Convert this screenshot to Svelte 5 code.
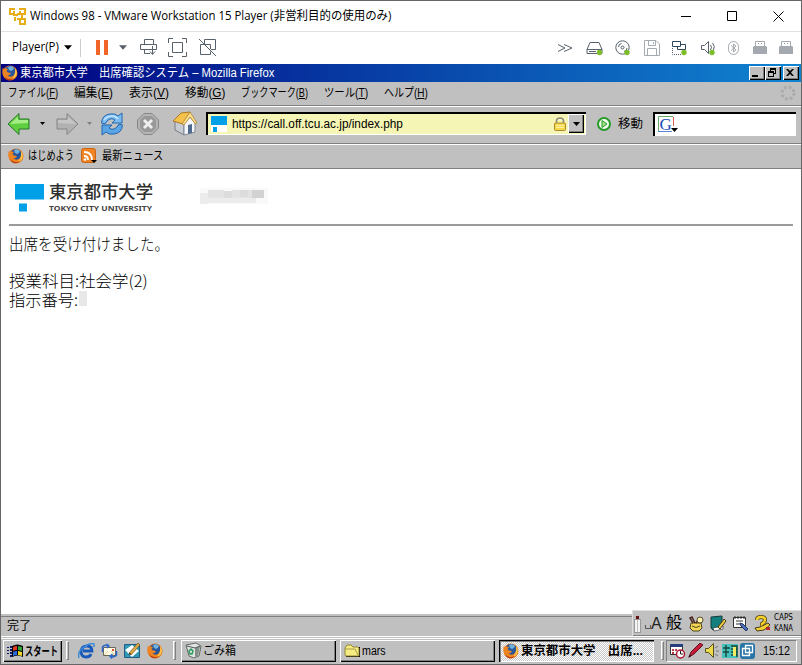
<script>
  const menus = [
    { text: 'ファイル(', key: 'F', width: 50 },
    { text: '編集(', key: 'E', width: 39 },
    { text: '表示(', key: 'V', width: 40 },
    { text: '移動(', key: 'G', width: 40 },
    { text: 'ブックマーク(', key: 'B', width: 67 },
    { text: 'ツール(', key: 'T', width: 44 },
    { text: 'ヘルプ(', key: 'H', width: 44 }
  ];

  // squeeze the label into the width of the old UI font
  function fit(node, width) {
    const inner = node.firstElementChild;
    inner.style.transform = `scaleX(${width / inner.offsetWidth})`;
  }
</script>

{#snippet label(text, width, key = '')}
  <span class="label" style:width="{width}px" use:fit={width}><span class="inner">{text}{#if key}<u>{key}</u>){/if}</span></span>
{/snippet}

{#snippet caret(kind)}
  <svg class="caret {kind}" width="9" height="5" viewBox="0 0 9 5"><path d="M0 0h9L4.500 5z" /></svg>
{/snippet}

{#snippet firefox()}
  <svg class="fox" width="16" height="16" viewBox="0 0 16 16">
    <circle cx="8" cy="8" r="7.500" fill="#e0701a" />
    <circle cx="8" cy="6.500" r="5.500" fill="#28569c" />
    <path d="M6 2q4-2 6 1-1 3-3 3L7 5z" fill="#6fb2dc" />
    <path d="M1 2q0 2 1 2 2-1 4 0L4.500 6 6 7.500l3 .5q-1 3-4 2 3 3 6 1t2-7q4 5 0 9-5 4-10 0Q-1 9 1 2z" fill="#ee8420" />
    <path d="M13 3q3 4 1 8-2 3-5 3 5-3 4-11z" fill="#fbc64a" />
    <path d="M2 11q4 5 10 2-4 4-8 1z" fill="#b83a16" />
  </svg>
{/snippet}

{#snippet usb()}
  <svg width="14" height="16" viewBox="0 0 14 16">
    <path d="M2.500 7V1.500h9V7" fill="#fff" stroke="#a3a9ae" />
    <path d="M5 3h1v1H5zM8 3h1v1H8z" fill="#8b9298" stroke="none" />
    <path d="M1 6h12l1 1v7H0V7z" fill="#a3a9ae" stroke="none" />
  </svg>
{/snippet}

<div class="vm">
  <header class="vm-title">
    <svg class="vm-logo" width="17" height="17" viewBox="0 0 17 17" fill="none" stroke="#e6ae18" stroke-width="2">
      <path d="M6 1H1v5h3M5 3v4h4M10 1h6v5h-5V3M8 6h4M13 7v3M8 11h8v5h-5v-4M6 9v4" />
    </svg>
    {@render label('Windows 98 - VMware Workstation 15 Player (非営利目的の使用のみ)', 361)}
    <div class="vm-controls">
      <svg width="11" height="11" viewBox="0 0 11 11"><path d="M0 5.500h10" /></svg>
      <svg width="11" height="11" viewBox="0 0 11 11"><path d="M.5.5h9v9h-9z" /></svg>
      <svg width="11" height="11" viewBox="0 0 11 11"><path d="M.5.500l10 10M10.500.5l-10 10" /></svg>
    </div>
  </header>

  <div class="vm-bar">
    {@render label('Player(P)', 47)}
    {@render caret('player')}
    <i class="rule"></i>
    <i class="pause"></i>
    {@render caret('power')}
    <div class="vm-tools">
      <svg width="18" height="18" viewBox="0 0 18 18">
        <path d="M5.500 6V1.500h9V6M1.500 6.500h16v5h-16zM5.500 11v4.500H11M13.500 8v8M11 13.500l2.500 3 2.500-3" />
      </svg>
      <svg width="19" height="19" viewBox="0 0 19 19">
        <path d="M.5 5V.5H5M14 .5h4.500V5M18.500 14v4.500H14M5 18.500H.5V14M4.500 4.500h10v10h-10z" />
      </svg>
      <svg width="19" height="19" viewBox="0 0 19 19">
        <path d="M6.500 7V1.500h11v10H13M12.500 11V6.500h-10v10h10v-3M1 1l17 17" />
      </svg>
    </div>
    <div class="devices">
      <svg width="16" height="16" viewBox="0 0 16 16"><path d="M1 4.500l7 3.500-7 3.500M7 4.500L15 8l-8 3.500" /></svg>
      <svg width="17" height="16" viewBox="0 0 17 16">
        <path d="M4 2.500h9l3 7v4H1v-4zM1 9.500h15M3 11.500h7" /><circle class="on" cx="13.500" cy="12.500" r="2.700" />
      </svg>
      <svg width="16" height="16" viewBox="0 0 16 16">
        <circle cx="7.500" cy="7.500" r="6.700" /><circle cx="7.500" cy="7.500" r="1.500" />
        <path d="M3.500 7q0-3 3-3.500M12 8q0 3-3 3.500" /><circle class="on" cx="12" cy="12.500" r="2.700" />
      </svg>
      <svg class="off" width="16" height="16" viewBox="0 0 16 16"><path d="M.5.5H12L15.500 4v11.500H.5zM4.500.5v5h7v-5M3.500 15.500v-7h9v7M9.500 2v2" /></svg>
      <svg width="16" height="16" viewBox="0 0 16 16">
        <path d="M.5 1.500h8v5h-8zM5.500 6V9.500h8v-5h-5" stroke="#30475a" />
        <path d="M.5 8v6.500H10" stroke-dasharray="1 1" /><circle class="on" cx="12" cy="12.500" r="2.700" />
      </svg>
      <svg width="15" height="16" viewBox="0 0 15 16">
        <path d="M.5 5.500h3l4-4v12l-4-4h-3zM9.500 5q2 2 0 5M11.500 3q3 3 1 7" /><circle class="on" cx="11" cy="12.500" r="2.700" />
      </svg>
      <svg class="off" width="12" height="16" viewBox="0 0 12 16">
        <rect x=".5" y="1.500" width="10" height="13" rx="5" /><path d="M3 5.500l5 4.500-2.500 2V4L8 6l-5 4.500" />
      </svg>
      {@render usb()}
      {@render usb()}
    </div>
  </div>

  <div class="caption">
    {@render firefox()}
    {@render label('東京都市大学　出席確認システム – Mozilla Firefox', 254)}
    <div class="caption-buttons">
      <b><svg width="10" height="9" viewBox="0 0 10 9"><path d="M1 7h6v2H1z" /></svg></b>
      <b><svg width="10" height="9" viewBox="0 0 10 9"><path d="M3 0h6v6H7V5h1V2H4v1H3zM1 3h6v6H1zM2 5v3h4V5z" fill-rule="evenodd" /></svg></b>
      <b class="close"><svg width="10" height="9" viewBox="0 0 10 9"><path d="M1 1h2l2 2 2-2h2L6 4.500 9 8H7L5 6 3 8H1l3-3.500z" /></svg></b>
    </div>
  </div>

  <nav class="menu">
    {#each menus as m}
      {@render label(m.text, m.width, m.key)}
    {/each}
    <svg class="throbber" width="16" height="16" viewBox="0 0 16 16"><circle cx="8" cy="8" r="6" /></svg>
  </nav>

  <div class="nav">
    <svg class="back" width="24" height="24" viewBox="0 0 24 24">
      <path d="M1 12L12 1.500V7h10v10H12v5.500z" fill="#5fce3f" stroke="#27792a" />
      <path d="M3 12l8-7.500V8h10v3z" fill="#a5ec84" />
    </svg>
    {@render caret('small')}
    <svg class="forward" width="24" height="24" viewBox="0 0 24 24">
      <path d="M23 12L12 1.500V7H2v10h10v5.500z" fill="#b2b2b2" stroke="#858585" />
      <path d="M21 12l-8-7.500V8H3v3z" fill="#c6c6c6" />
    </svg>
    {@render caret('small dim')}
    <svg class="reload" width="24" height="24" viewBox="0 0 24 24" stroke="#2364ad">
      <path d="M1.500 11Q2 3 10 2q5-1 8 2l4-3v10H12l3-3Q11 5 7 9l-2 3z" fill="#79bdf2" />
      <path d="M22.500 13Q22 21 14 22q-5 1-8-2l-4 3V13h10l-3 3q4 3 8-1l2-3z" fill="#59a5e6" />
      <path d="M4 8q3-4 8-4 4 0 6 3" fill="none" stroke="#c4e4fb" stroke-width="1.500" />
    </svg>
    <svg class="stop" width="22" height="22" viewBox="0 0 22 22">
      <path d="M7 .5h8L21.500 7v8L15 21.500H7L.5 15V7z" fill="#b4b4b4" stroke="#858585" />
      <path d="M7 3h8l4 4v8l-4 4H7l-4-4V7z" fill="#989898" />
      <path d="M7 7l8 8M15 7l-8 8" stroke="#eee" stroke-width="3" />
    </svg>
    <svg class="home" width="26" height="25" viewBox="0 0 26 25">
      <path d="M3 10l9 2v12l-9-5z" fill="#c8ccd2" stroke="#747b86" />
      <path d="M12 13l6-7 5 6v9l-11 3z" fill="#f5f7fa" stroke="#7d8796" />
      <path d="M1 10l8-8 9-1-7 12z" fill="#f4c14a" stroke="#a9782b" />
      <path d="M10 13l8-12 7 11-1.500 1L18 6l-6 8z" fill="#ffe08a" stroke="#ac8034" stroke-width=".8" />
      <path d="M16 14l4-1v9l-4 1z" fill="#50698f" />
    </svg>
    <div class="url">
      <svg width="16" height="16" viewBox="0 0 16 16"><path d="M0 0h16v16H0z" fill="#fff" /><path d="M0 0h16v9H0zM2 11h4v5H2z" fill="#00a0e9" /></svg>
      {@render label('https://call.off.tcu.ac.jp/index.php', 171)}
      <svg class="lock" width="12" height="14" viewBox="0 0 12 14">
        <path d="M2.500 7V4q0-3 3.500-3t3.500 3v3" fill="none" stroke="#8d8a7c" stroke-width="1.600" />
        <rect x=".5" y="6" width="11" height="7.500" rx="1" fill="#f5d94c" stroke="#ad8927" /><path d="M2 8.500h8M2 10.500h8" stroke="#fff2a0" />
      </svg>
      <b class="drop"><svg width="7" height="4" viewBox="0 0 7 4"><path d="M0 0h7L3.500 4z" /></svg></b>
    </div>
    <svg class="go" width="14" height="14" viewBox="0 0 14 14">
      <circle cx="7" cy="7" r="6" fill="#f0fbe9" stroke="#289a2b" stroke-width="2" /><path d="M5 3.500L10 7l-5 3.500z" fill="#a1e288" stroke="#289a2b" />
    </svg>
    {@render label('移動', 25)}
    <div class="search">
      <svg width="21" height="18" viewBox="0 0 21 18">
        <path d="M.5 16V.5H15" stroke="#69a96c" fill="none" /><path d="M15.500 1v9" stroke="#d95c4c" /><path d="M0 15.500h14" stroke="#5d86d0" />
        <text x="1.500" y="14">G</text><path d="M13 12h7l-3.500 4z" />
      </svg>
    </div>
  </div>

  <div class="bookmarks">
    {@render firefox()}
    {@render label('はじめよう', 46)}
    <svg class="rss" width="17" height="16" viewBox="0 0 17 16">
      <rect x=".5" y=".5" width="14" height="14" rx="2" fill="#f08322" stroke="#ca6416" />
      <path d="M3 4q8 0 8 8M3 8q4 0 4 4" fill="none" stroke="#fff" stroke-width="1.800" /><circle cx="4" cy="11.500" r="1.300" fill="#fff" />
      <path d="M10 12h6l-3 3z" />
    </svg>
    {@render label('最新ニュース', 61)}
  </div>

  <main>
    <div class="brand">
      <svg width="29" height="28" viewBox="0 0 29 28" fill="#00a0e9"><path d="M0 0h29v15.500H0zM4 19.500h8V27.500H4z" /></svg>
      <div class="brand-name">
        <div class="jp">{@render label('東京都市大学', 104)}</div>
        <div class="en">{@render label('TOKYO CITY UNIVERSITY', 103)}</div>
      </div>
      <svg class="masked" width="68" height="20" viewBox="0 0 68 20">
        <path d="M0 2h68v16H0z" fill="#f9f9f9" /><path d="M0 7h8v11H0zM8 12h48v5H8z" fill="#ececec" />
        <path d="M8 4h16v8H8zM32 4h24v8H32z" fill="#e3e3e3" /><path d="M24 5h8v7h-8zM40 4h8v7h-8z" fill="#dcdcdc" /><path d="M52 4h12v8H52z" fill="#d2d2d2" />
      </svg>
    </div>
    <hr />
    <p>{@render label('出席を受け付けました。', 160)}</p>
    <p class="subject">{@render label('授業科目:社会学(2)', 139)}</p>
    <p>{@render label('指示番号:', 69)}<i class="mask"></i></p>
  </main>

  <footer class="status">{@render label('完了', 24)}</footer>

  <div class="taskbar">
    <button class="start">
      <svg width="16" height="14" viewBox="0 0 16 14">
        <path d="M0 3h2v1H0zM0 6h2v1H0zM0 9h2v1H0zM3 2h2v2H3zM3 5h2v2H3zM3 8h2v2H3zM3 11h2v2H3z" fill="#0b1763" />
        <path d="M5 2q5-3 11 0v11q-5-3-11 0z" />
        <path d="M6 3q2-1 4-1v4q-2 0-4 1z" fill="#e03a22" /><path d="M11 2l4 1v4l-4-1z" fill="#35a63b" /><path d="M6 8q2-1 4-1v4q-2 0-4 1z" fill="#2e68de" /><path d="M11 7l4 1v4l-4-1z" fill="#f0d82b" />
      </svg>
      {@render label('スタート', 33)}
    </button>
    <i class="grip"></i>
    <div class="quick">
      <svg width="17" height="16" viewBox="0 0 17 16">
        <path d="M13 11q-1 3-5 3-5 0-5-6 1-5 6-5 5 0 5 5H5" fill="none" stroke="#1959bb" stroke-width="2.800" />
        <path d="M4 6q2-3 5-3" fill="none" stroke="#7fc2ef" />
        <path d="M1 15Q-1 9 6 4q7-5 10-3v3" fill="none" stroke="#398bd8" stroke-width="1.500" />
      </svg>
      <svg width="17" height="16" viewBox="0 0 17 16">
        <path d="M2.500 4.500h12v8h-12z" fill="#fffbe2" stroke="#6c675b" /><path d="M3 12l4-4M14 12l-4-4" fill="none" stroke="#d9cfa0" /><path d="M11 6h2v2h-2z" fill="#d74b32" />
        <path d="M1.500 9V4q2-3 6-1M5.500 1l2.500 2-2 2" fill="none" stroke="#2a69cb" stroke-width="1.500" />
        <path d="M15.500 8v4q-2 3-6 1M11.500 11L9 13l2 2.500" fill="none" stroke="#2a69cb" stroke-width="1.500" />
      </svg>
      <svg width="17" height="16" viewBox="0 0 17 16">
        <path d="M.5 1.500h15v13H.5z" fill="#2f9ab3" stroke="#205b83" /><path d="M1 7l7-5 7 6-7 6z" fill="#fff" /><path d="M5 10l9-10 2 2L7 12z" fill="#e1ac43" stroke="#6e4c24" stroke-width=".7" /><path d="M4 12l2-2 1 1z" />
      </svg>
      {@render firefox()}
    </div>
    <i class="grip second"></i>
    <div class="tasks">
      <div class="task">
        <svg width="17" height="17" viewBox="0 0 17 17">
          <path d="M1 3l10-2 5 3-2 10-5 2-5-2z" fill="#dfe6e1" stroke="#626865" /><path d="M10 6l5-2-2 10-3 1z" fill="#858e89" /><path d="M2 4l8 2 5-2" fill="none" stroke="#555" /><path d="M4 9l2-2 2 2-1 3H5z" fill="none" stroke="#2c9960" stroke-width="1.500" />
        </svg>
        {@render label('ごみ箱', 33)}
      </div>
      <div class="task">
        <svg width="17" height="15" viewBox="0 0 17 15">
          <path d="M2 14h14V4h-1v9H2z" /><path d="M1 12V5l2-3h4l2 2h5l1 1v8H2z" fill="#f7ec83" stroke="#918638" /><path d="M1 6h10l3 6" fill="none" stroke="#a49e4b" />
        </svg>
        {@render label('mars', 24)}
      </div>
      <div class="task active">
        {@render firefox()}
        {@render label('東京都市大学　出席...', 122)}
      </div>
    </div>
    <i class="grip tray-grip"></i>
    <div class="tray">
      <svg width="17" height="16" viewBox="0 0 17 16">
        <path d="M1.500 1.500h12v10h-12z" fill="#fff" stroke="#333" /><path d="M1 1h13v3H1z" fill="#283d7b" /><path d="M3 6h2v2H3zM6 6h2v2H6zM3 9h2v2H3z" fill="#b43c42" /><circle cx="11.500" cy="11" r="4" fill="#fff" stroke="#ac1830" stroke-width="1.500" /><path d="M11.500 8v3H14" fill="none" stroke="#222" />
      </svg>
      <svg width="17" height="16" viewBox="0 0 17 16"><path d="M2 14l2-5 9-9 3 2-9 9z" fill="#c51d38" stroke="#611224" /><path d="M1 15l3-2-1-1z" /></svg>
      <svg width="16" height="16" viewBox="0 0 16 16"><path d="M.5 5.500h3l5-5v14l-5-5h-3z" fill="#ecda48" stroke="#555024" /><path d="M10 5l3-2M11 8h3M10 11l3 2" stroke="#777" /></svg>
      <svg width="16" height="16" viewBox="0 0 16 16"><path d="M0 1h16v14H0z" fill="#45c1bd" /><path d="M1 5h7M4 2v12M1 9h6M9 3h6v11M9 6h6M9 9h6M9 12h6" fill="none" stroke="#174639" stroke-width="1.400" /><path d="M11 4h3v9h-3z" fill="#f4ed61" /></svg>
      <svg width="17" height="16" viewBox="0 0 17 16"><rect x="1" width="15" height="16" rx="3" fill="#2775a7" /><path d="M3.500 5.500h7v7h-7zM6.500 2.500h7v7h-7z" fill="none" stroke="#fff" stroke-width="1.300" /></svg>
      {@render label('15:12', 27)}
    </div>
  </div>

  <div class="ime">
    <i class="pin"></i>
    <svg class="half" width="19" height="16" viewBox="0 0 19 16"><path d="M1.500 10v3.500h5V10" /><text x="7" y="14">A</text></svg>
    <span class="kanji">般</span>
    <div class="ime-icons">
      <svg width="17" height="17" viewBox="0 0 17 17">
        <path d="M3 8h10l1 5-3 3H5l-3-3z" fill="#f2d653" stroke="#4e451e" /><path d="M5 8L2 3l2-1 3 6M8 8l3-4" fill="none" stroke="#4b2620" stroke-width="1.500" /><circle cx="12" cy="5" r="3" fill="#fff2a8" stroke="#544d33" /><path d="M4 11q4 3 8 0" fill="none" stroke="#4e451e" />
      </svg>
      <svg width="17" height="17" viewBox="0 0 17 17">
        <path d="M1 2l11-1v12L3 15l-2-2z" fill="#147f7c" stroke="#123d3d" /><path d="M3 13l10-2v3L4 16z" fill="#fff" stroke="#333" stroke-width=".7" /><path d="M8 12l6-8 2 2-6 8z" fill="#ebca45" stroke="#473818" />
      </svg>
      <svg width="17" height="17" viewBox="0 0 17 17">
        <path d="M1.500 2.500h12v10h-12z" fill="#fff" stroke="#333" /><path d="M3 1v3M6 1v3M9 1v3M12 1v3M4 6h7M4 9h4" stroke="#333" /><path d="M8 8l3 1 5 5-2 2-5-5z" fill="#4870ba" stroke="#233967" />
      </svg>
      <svg width="17" height="17" viewBox="0 0 17 17">
        <path d="M3 5q0-3 4-3t4 3q0 2-3 4v2" fill="none" stroke="#4f3d10" stroke-width="4" /><path d="M3 5q0-3 4-3t4 3q0 2-3 4v2" fill="none" stroke="#f5d32b" stroke-width="2.500" /><path d="M1 13l5-1 8-4 2 2-6 5-7 1z" fill="#f4d232" stroke="#443b19" /><path d="M12 12h4v3h-4z" fill="#b8272e" />
      </svg>
    </div>
    <div class="locks">
      {@render label('CAPS', 19)}
      {@render label('KANA', 19)}
    </div>
  </div>
</div>

<style>
  :global(body) {
    background: #fff;
  }
  .vm {
    position: relative;
    display: flex;
    flex-direction: column;
    width: 802px;
    height: 665px;
    box-sizing: border-box;
    overflow: hidden;
    border: 1px solid #666;
    background: #fff;
    color: #000;
    font: 12px/16px 'Liberation Sans', 'Noto Sans CJK JP', sans-serif;
  }
  .vm > * {
    box-sizing: border-box;
    flex-shrink: 0;
  }
  svg {
    display: block;
    flex-shrink: 0;
  }
  .label {
    display: inline-block;
    flex-shrink: 0;
    white-space: nowrap;
  }
  .inner {
    display: inline-block;
    transform-origin: left;
  }
  u {
    text-underline-offset: 1px;
  }
  .vm-title {
    display: flex;
    align-items: center;
    height: 30px;
    padding-left: 8px;
    font-family: 'Open Sans', 'Noto Sans CJK JP', sans-serif;
  }
  .vm-logo {
    margin-right: 4px;
  }
  .vm-controls {
    display: flex;
    gap: 35px;
    margin: 0 17px 0 auto;
    fill: none;
    stroke: #000;
  }
  .vm-bar {
    display: flex;
    align-items: center;
    height: 33px;
    padding-left: 11px;
    border-top: 1px solid #e2e2e2;
    font-family: 'Open Sans', sans-serif;
  }
  .vm-bar > .label {
    margin-top: -2px;
  }
  .player {
    width: 8px;
    margin: -2px 8px 0 5px;
  }
  .rule {
    width: 1px;
    height: 18px;
    background: #ccc;
  }
  .pause {
    width: 4px;
    height: 15px;
    margin: -1px 0 0 15px;
    border: solid #f26529;
    border-width: 0 4px;
  }
  .power {
    width: 8px;
    margin: -2px 0 0 11px;
    fill: #566069;
  }
  .vm-tools {
    display: flex;
    align-items: center;
    gap: 11px;
    margin: -2px 0 0 12px;
    fill: none;
    stroke: #56616b;
  }
  .devices {
    display: flex;
    gap: 12.500px;
    margin: -1px 8px 0 auto;
    fill: none;
    stroke: #56616b;
  }
  .off {
    stroke: #a4abb0;
  }
  .on {
    fill: #7dbd2c;
    stroke: none;
  }
  .caption {
    display: flex;
    align-items: center;
    height: 18px;
    padding: 0 2px 0 1px;
    background: linear-gradient(90deg, #000080, #1084d0);
    color: #fff;
  }
  .caption .fox {
    margin-right: 2px;
  }
  .caption-buttons {
    display: flex;
    margin-left: auto;
  }
  .caption-buttons b {
    width: 16px;
    height: 14px;
    padding: 2px;
    box-sizing: border-box;
    background: #c0c0c0;
    box-shadow: inset 1px 1px #fff, inset -1px -1px #000, inset -2px -2px #808080;
  }
  .caption-buttons .close {
    margin-left: 2px;
  }
  .menu {
    display: flex;
    align-items: center;
    gap: 16px;
    height: 23px;
    padding: 0 5px 1px 7px;
    background: #c0c0c0;
  }
  .throbber {
    margin-left: auto;
    fill: none;
    stroke: #aaa;
    stroke-width: 3;
    stroke-dasharray: 2.700 2;
  }
  .nav,
  .bookmarks {
    display: flex;
    align-items: center;
    background: #c0c0c0;
    border-top: 1px solid #808080;
    box-shadow: inset 0 1px #fff;
  }
  .nav {
    height: 38px;
    padding: 0 0 2px 6px;
  }
  .small {
    width: 5px;
    height: 3px;
    margin: 0 10px 0 9px;
  }
  .small.dim {
    margin: 0 8px 0 8px;
    fill: #808080;
  }
  .stop {
    margin-left: 13px;
  }
  .home {
    margin-left: 13px;
  }
  .url {
    display: flex;
    align-items: center;
    width: 380px;
    height: 23px;
    margin: 0 11px 0 8px;
    padding: 2px 2px 2px 5px;
    box-sizing: border-box;
    background: #f5f5b5;
    box-shadow: inset 2px 2px #000, inset -1px -1px #fff;
    flex-shrink: 0;
  }
  .url .label {
    margin-left: 5px;
  }
  .lock {
    margin: 0 2px 0 auto;
  }
  .drop {
    display: flex;
    align-items: center;
    justify-content: center;
    width: 16px;
    height: 19px;
    background: #c0c0c0;
    box-shadow: inset 1px 1px #fff, inset -1px -1px #000, inset -2px -2px #808080;
  }
  .go {
    margin-right: 7px;
  }
  .search {
    width: 143px;
    height: 24px;
    margin-left: 10px;
    padding: 4px 5px;
    box-sizing: border-box;
    background: #fff;
    box-shadow: inset 2px 2px #000, inset -1px -1px #fff;
  }
  .search text {
    font: 17px 'Liberation Serif', serif;
    fill: #214db7;
  }
  .bookmarks {
    height: 26px;
    padding-left: 7px;
    border-bottom: 1px solid #808080;
  }
  .bookmarks .fox {
    margin-right: 4px;
  }
  .rss {
    margin: 0 4px 0 7px;
  }
  main {
    height: 445px;
    padding: 14px 8px 0;
    font: 16px/19px 'Noto Sans CJK JP', sans-serif;
  }
  .brand {
    display: flex;
    height: 41px;
    padding-left: 6px;
  }
  .brand > svg:first-child {
    margin-top: 1px;
  }
  .brand-name {
    width: 151px;
    margin-left: 5px;
    color: #303030;
    font-weight: 500;
  }
  .jp {
    height: 18px;
    font-size: 17px;
    line-height: 16px;
  }
  .en {
    height: 10px;
    color: #444;
    font: bold 7.500px/15px 'Noto Sans', sans-serif;
  }
  .masked {
    margin-top: 3px;
  }
  hr {
    height: 2px;
    margin: 0 0 8px;
    border: 0;
    background: #9a9a9a;
  }
  p {
    display: flex;
    height: 19px;
    margin: 0;
    font-weight: 300;
  }
  .subject {
    margin-top: 18px;
  }
  .mask {
    width: 8px;
    height: 15px;
    margin: 1px 0 0 1px;
    background: #e8e8e8;
  }
  .status {
    height: 22px;
    padding: 4px 6px;
    background: #c0c0c0;
    box-shadow: inset 0 2px #c0c0c0, inset 0 3px #808080;
  }
  .taskbar {
    display: flex;
    align-items: center;
    height: 28px;
    padding-left: 2px;
    background: #c0c0c0;
    border-top: 1px solid #fff;
    box-shadow: inset 0 1px #c0c0c0, inset 0 2px #fff;
  }
  .start,
  .task {
    display: flex;
    align-items: center;
    height: 22px;
    box-sizing: border-box;
    border: 0;
    background: #c0c0c0;
    box-shadow: inset 1px 1px #fff, inset -1px -1px #000, inset -2px -2px #808080;
  }
  .start {
    gap: 2px;
    width: 59px;
    padding: 0 0 0 4px;
    color: #000;
    font: bold 12px/16px 'Noto Sans CJK JP', sans-serif;
    text-align: left;
  }
  .grip {
    width: 3px;
    height: 19px;
    margin-left: 4px;
    box-sizing: border-box;
    border: 1px solid;
    border-color: #fff #808080 #808080 #fff;
  }
  .quick {
    display: flex;
    gap: 6px;
    margin-left: 9px;
  }
  .second {
    margin-left: 10px;
  }
  .tasks {
    display: flex;
    gap: 4px;
    margin-left: 5px;
  }
  .task {
    gap: 1px;
    width: 155px;
    padding-left: 4px;
  }
  .task.active {
    gap: 2px;
    padding: 1px 0 0 4px;
    background: repeating-conic-gradient(#fff 0 25%, #c8c8c8 0 50%) 0 0 / 2px 2px;
    box-shadow: inset 1px 1px #000, inset 2px 2px #808080, inset -1px -1px #fff;
    font-weight: bold;
  }
  .tray-grip {
    margin-left: 7px;
  }
  .tray {
    display: flex;
    align-items: center;
    gap: 1px;
    width: 131px;
    height: 22px;
    margin-left: 2px;
    padding-left: 2px;
    box-sizing: border-box;
    border: 1px solid;
    border-color: #808080 #fff #fff #808080;
  }
  .tray .label {
    margin-left: 6px;
  }
  .ime {
    position: absolute;
    right: 0;
    top: 609px;
    display: flex;
    align-items: center;
    width: 169px;
    height: 26px;
    padding-left: 3px;
    box-sizing: border-box;
    background: #c0c0c0;
    box-shadow: inset 1px 1px #dfdfdf, inset 0 -1px #808080;
  }
  .pin {
    width: 5px;
    height: 12px;
    margin-top: 6px;
    box-sizing: border-box;
    border: solid #f4f4f4;
    border-width: 0 2px;
    outline: 1px solid #999;
    box-shadow: 0 -5px 0 -1px #611;
  }
  .half {
    margin-left: 4px;
    fill: none;
    stroke: #555;
  }
  .half text {
    fill: #222;
    stroke: none;
    font: 16px 'Liberation Sans', sans-serif;
  }
  .kanji {
    margin: 0 6px 0 3px;
    font-size: 16px;
  }
  .ime-icons {
    display: flex;
    gap: 5px;
  }
  .locks {
    display: flex;
    flex-direction: column;
    margin-left: 3px;
    font: 8px/11px 'DejaVu Sans', sans-serif;
  }
</style>
